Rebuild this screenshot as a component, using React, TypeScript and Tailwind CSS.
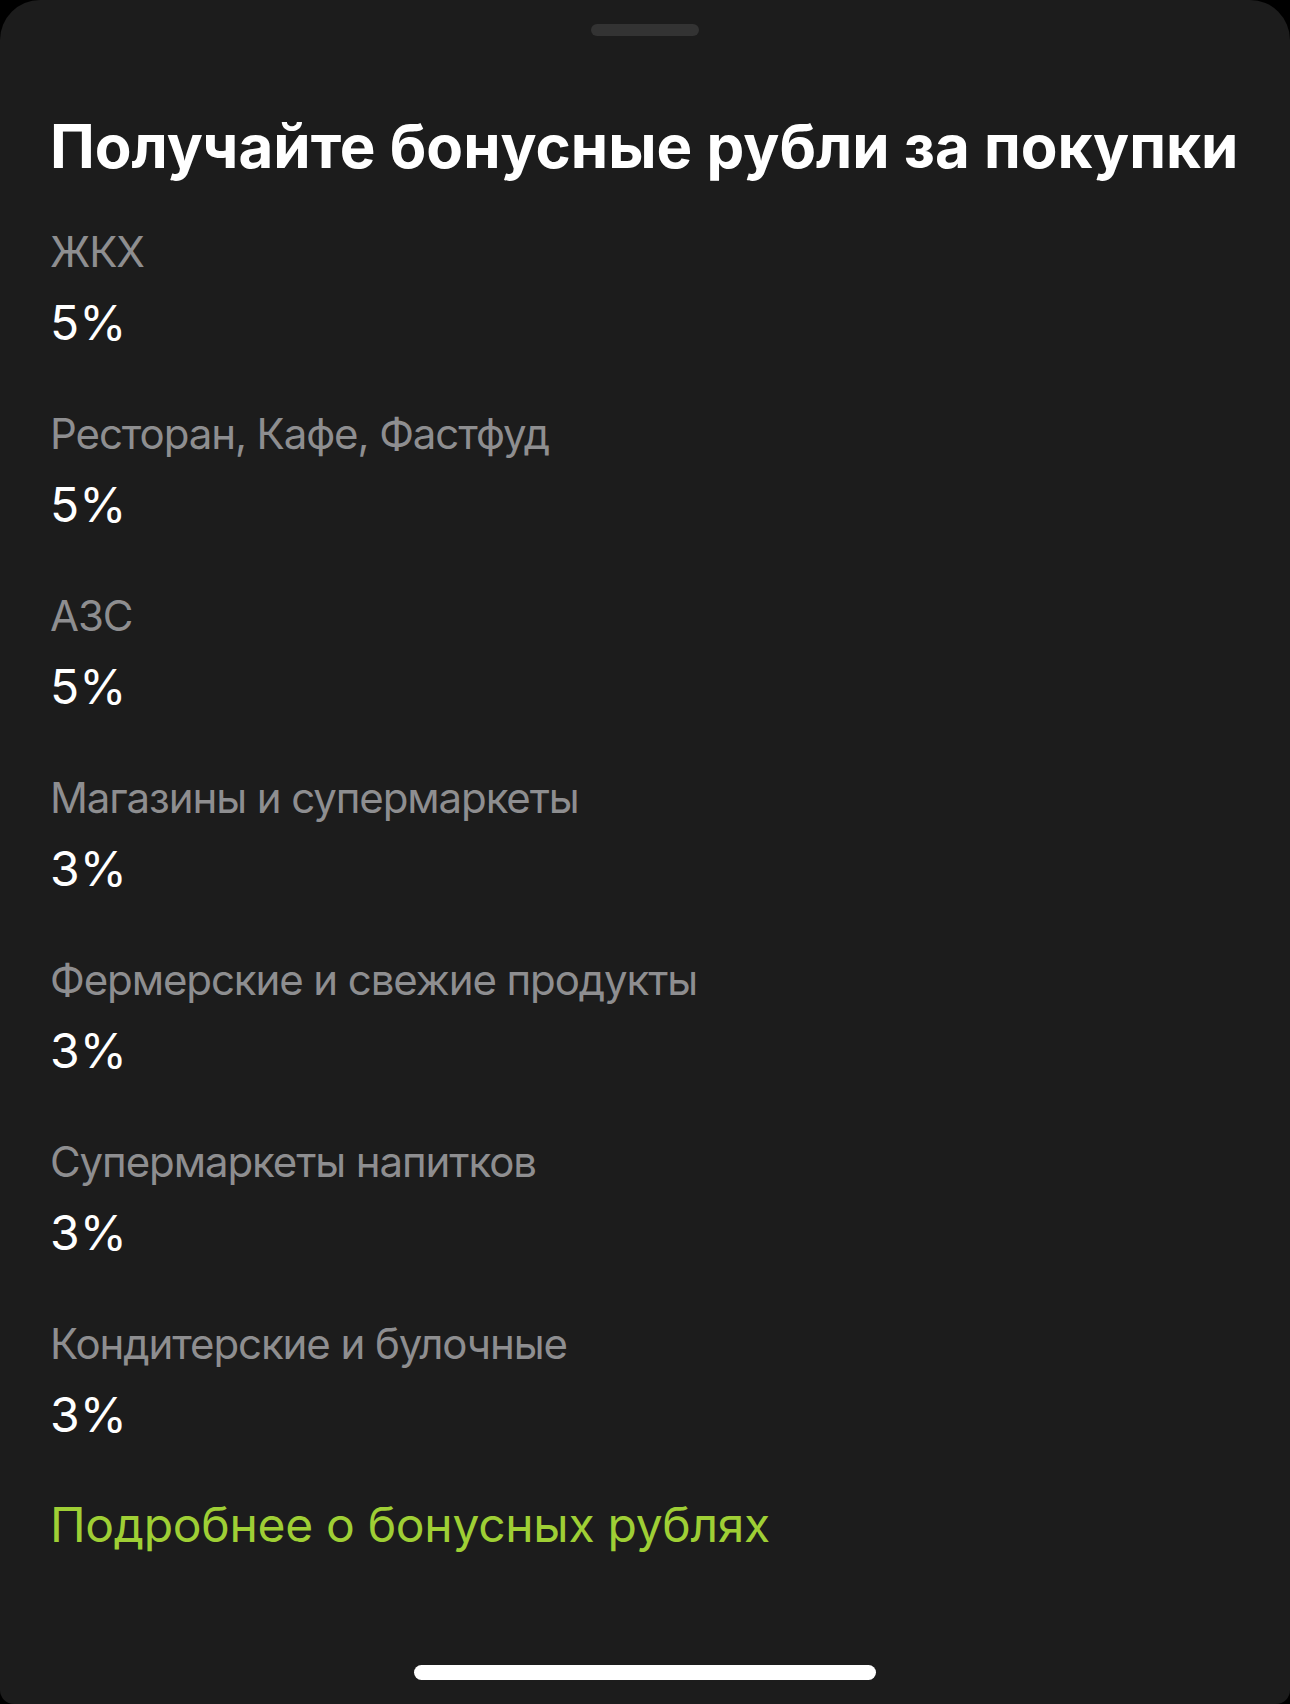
import React from 'react';

type Bonus = { label: string; value: string };

const bonuses: Bonus[] = [
  { label: 'ЖКХ', value: '5%' },
  { label: 'Ресторан, Кафе, Фастфуд', value: '5%' },
  { label: 'АЗС', value: '5%' },
  { label: 'Магазины и супермаркеты', value: '3%' },
  { label: 'Фермерские и свежие продукты', value: '3%' },
  { label: 'Супермаркеты напитков', value: '3%' },
  { label: 'Кондитерские и булочные', value: '3%' },
];

const BonusRow: React.FC<Bonus> = ({ label, value }) => (
  <div className="flex flex-col">
    <span className="text-[42px] leading-[50px] tracking-[-1.1px] text-[#8e8e90]">{label}</span>
    <span className="mt-[18px] text-[48px] leading-[56px] text-white">{value}</span>
  </div>
);

const App: React.FC = () => {
  return (
    <div className="w-[1290px] h-[1704px] bg-black font-['Inter','Noto_Sans',sans-serif] antialiased">
      <div className="relative h-full flex flex-col rounded-t-[40px] rounded-b-[14px] bg-[#1c1c1c] px-[50px]">
        <div className="flex justify-center pt-[24px]">
          <div className="w-[108px] h-[12px] rounded-full bg-[#333333]" />
        </div>

        <h1 className="mt-[74px] text-[60px] leading-[72px] font-bold text-white whitespace-nowrap">
          Получайте бонусные рубли за покупки
        </h1>

        <div className="mt-[45px] flex flex-col gap-[58px]">
          {bonuses.map((b) => (
            <BonusRow key={b.label} label={b.label} value={b.value} />
          ))}
        </div>

        <a className="mt-[54px] text-[48px] leading-[56px] tracking-[-0.3px] text-[#9fcf35]" href="#">
          Подробнее о бонусных рублях
        </a>

        <div className="absolute bottom-[24px] left-1/2 -translate-x-1/2 w-[462px] h-[15px] rounded-full bg-white" />
      </div>
    </div>
  );
};

export default App;
